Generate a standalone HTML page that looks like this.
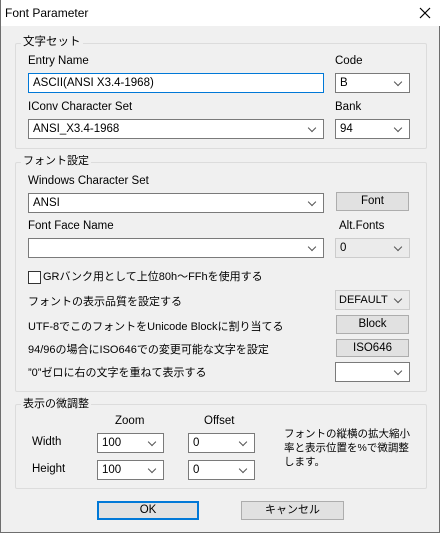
<!DOCTYPE html><html><head><meta charset="utf-8"><style>
*{box-sizing:border-box;margin:0;padding:0}
body{width:440px;height:533px;background:#f0f0f0;font-family:"Liberation Sans","Noto Sans CJK JP",sans-serif;font-size:11.5px;color:#000;position:relative;overflow:hidden;border:1px solid #6e6e6e;border-top:none}
.a{position:absolute;white-space:nowrap;line-height:14px}
.title{position:absolute;left:0;top:0;width:440px;height:26px;background:#fff;border-bottom:none}
.grp{position:absolute;border:1px solid #dcdcdc;border-radius:2px}
.gl{position:absolute;background:#f0f0f0;padding:0 2px;line-height:14px}
.in{position:absolute;background:#fff;border:1px solid #7a7a7a;padding-left:4px;line-height:18px}
.cb::after{content:"";position:absolute;right:8px;top:5px;width:5px;height:5px;border-right:1px solid #555;border-bottom:1px solid #555;transform:rotate(45deg)}
.dis{background:#ebebeb;border-color:#cccccc}
.btn{position:absolute;background:#e1e1e1;border:1px solid #adadad;text-align:center;line-height:16px}
.j{font-size:11px}
</style></head><body>
<div class="title"><span class="a" style="left:4px;top:6px;font-size:12px">Font Parameter</span>
<svg style="position:absolute;left:418px;top:7px" width="12" height="12"><path d="M1 1L11 11M11 1L1 11" stroke="#000" stroke-width="1.2"/></svg></div>

<div class="grp" style="left:14px;top:43px;width:412px;height:106px"></div>
<div class="gl" style="left:20px;top:35px">文字セット</div>
<div class="a" style="left:27px;top:54px">Entry Name</div>
<div class="in" style="left:27px;top:73px;width:296px;height:20px;border-color:#0078d7">ASCII(ANSI X3.4-1968)</div>
<div class="a" style="left:334px;top:54px">Code</div>
<div class="in cb" style="left:334px;top:73px;width:75px;height:20px">B</div>
<div class="a" style="left:27px;top:100px">IConv Character Set</div>
<div class="in cb" style="left:27px;top:119px;width:296px;height:20px">ANSI_X3.4-1968</div>
<div class="a" style="left:334px;top:100px">Bank</div>
<div class="in cb" style="left:334px;top:119px;width:75px;height:20px">94</div>

<div class="grp" style="left:14px;top:162px;width:412px;height:230px"></div>
<div class="gl j" style="left:20px;top:154px">フォント設定</div>
<div class="a" style="left:27px;top:174px">Windows Character Set</div>
<div class="in cb" style="left:27px;top:193px;width:296px;height:20px">ANSI</div>
<div class="btn" style="left:335px;top:192px;width:73px;height:19px">Font</div>
<div class="a" style="left:27px;top:219px">Font Face Name</div>
<div class="in cb" style="left:27px;top:238px;width:296px;height:20px"></div>
<div class="a" style="left:338px;top:219px">Alt.Fonts</div>
<div class="in cb dis" style="left:334px;top:238px;width:75px;height:20px">0</div>
<div style="position:absolute;left:27px;top:271px;width:13px;height:13px;border:1px solid #333;background:#fff"></div>
<div class="a j" style="left:42px;top:270px">GRバンク用として上位80h～FFhを使用する</div>
<div class="a j" style="left:27px;top:295px">フォントの表示品質を設定する</div>
<div class="in cb dis" style="left:334px;top:290px;width:75px;height:20px;padding-left:3px;font-size:11px">DEFAULT</div>
<div class="a j" style="left:27px;top:320px">UTF-8でこのフォントをUnicode Blockに割り当てる</div>
<div class="btn" style="left:335px;top:315px;width:73px;height:19px">Block</div>
<div class="a j" style="left:27px;top:343px">94/96の場合にISO646での変更可能な文字を設定</div>
<div class="btn" style="left:335px;top:339px;width:73px;height:18px">ISO646</div>
<div class="a j" style="left:27px;top:366px">”0”ゼロに右の文字を重ねて表示する</div>
<div class="in cb" style="left:334px;top:362px;width:75px;height:20px"></div>

<div class="grp" style="left:14px;top:404px;width:412px;height:85px"></div>
<div class="gl j" style="left:20px;top:397px">表示の微調整</div>
<div class="a" style="left:114px;top:414px">Zoom</div>
<div class="a" style="left:203px;top:414px">Offset</div>
<div class="a" style="left:31px;top:435px">Width</div>
<div class="a" style="left:31px;top:462px">Height</div>
<div class="in cb" style="left:96px;top:433px;width:67px;height:20px">100</div>
<div class="in cb" style="left:187px;top:433px;width:67px;height:20px">0</div>
<div class="in cb" style="left:96px;top:460px;width:67px;height:20px">100</div>
<div class="in cb" style="left:187px;top:460px;width:67px;height:20px">0</div>
<div class="a" style="left:283px;top:427px;line-height:14px;white-space:normal;width:130px;font-size:10.5px">フォントの縦横の拡大縮小率と表示位置を%で微調整します。</div>

<div class="btn" style="left:96px;top:501px;width:102px;height:19px;border:2px solid #0078d7;line-height:15px">OK</div>
<div class="btn j" style="left:240px;top:501px;width:103px;height:19px">キャンセル</div>
</body></html>
